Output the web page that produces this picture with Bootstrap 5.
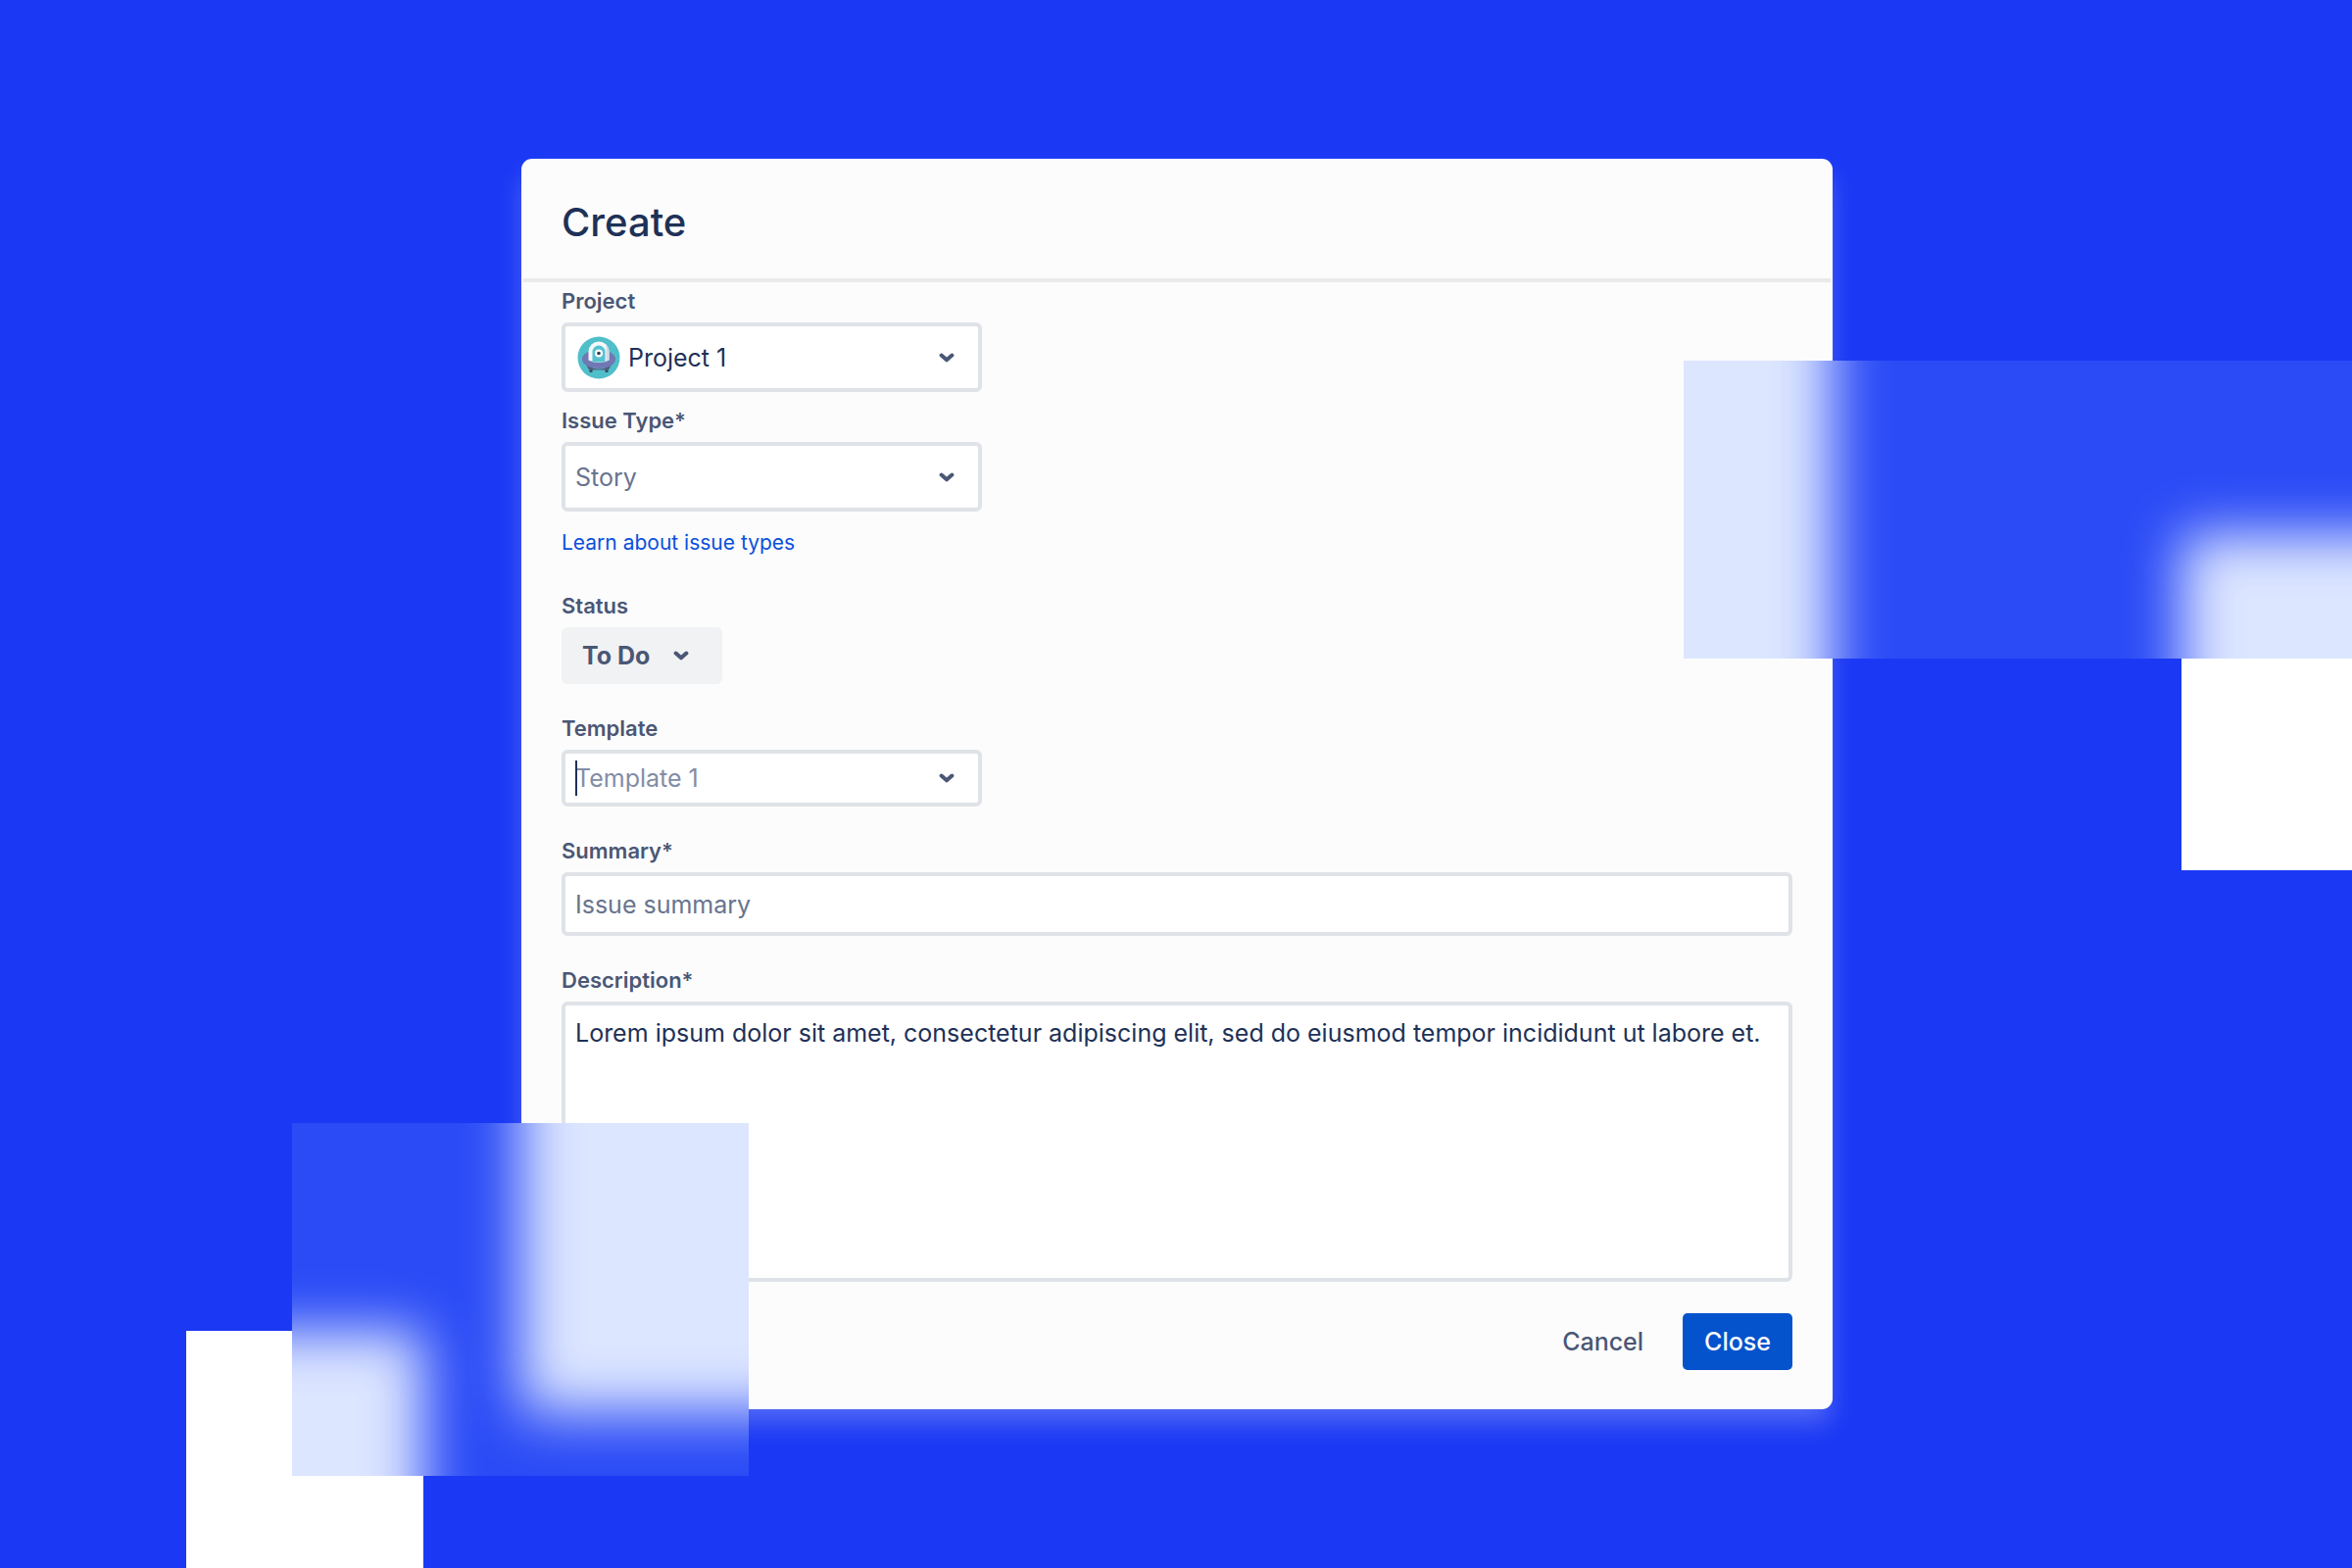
<!DOCTYPE html>
<html lang="en">
<head>
<meta charset="utf-8">
<meta name="viewport" content="width=device-width, initial-scale=1">
<title>Create</title>
<link href="https://cdn.jsdelivr.net/npm/bootstrap@5.3.0/dist/css/bootstrap.min.css" rel="stylesheet">
<style>
  :root {
    --ink: #1e3157;
    --ink-soft: #4a5775;
    --ink-muted: #68748f;
    --line: #dfe2e6;
    --backdrop: #1b39f4;
    --glow: 0 16px 26px -3px rgba(255, 255, 255, .25);
  }
  body { background: var(--backdrop); color: var(--ink); font-family: Inter, sans-serif; font-size: 25px; line-height: 32px; }
  .stage { min-height: 100vh; padding: 162px 24px 120px 26px; }

  .dialog-box { max-width: 1338px; background: #fcfcfc; border-radius: 11px; box-shadow: var(--glow); }
  .dialog-head { margin: 0 2px; padding: 44px 39px 36px; border-bottom: 4px solid #e8eaec; }
  .dialog-head h1 { font-size: 40px; line-height: 42px; font-weight: 500; }
  .dialog-form { padding: 7px 41px 40px; }

  .field-label { display: block; margin-bottom: 10px; font-size: 22px; line-height: 24px; font-weight: 600; color: var(--ink-soft); }
  .learn-link { font-size: 21px; line-height: 24px; color: #0b50dc; }

  .form-select, .form-control {
    border: 4px solid var(--line);
    border-radius: 6px;
    background-color: #fff;
    color: var(--ink);
    font-size: 25px;
    line-height: 32px;
    padding: 0 10px;
  }
  .form-select {
    --bs-form-select-bg-img: url("data:image/svg+xml,%3csvg xmlns='http://www.w3.org/2000/svg' viewBox='0 0 16 10'%3e%3cpath fill='none' stroke='%234a5775' stroke-width='4' stroke-linecap='round' stroke-linejoin='round' d='M2.600 2.500 8 7.300l5.400-4.800'/%3e%3c/svg%3e");
    background-size: 16px 10px;
    background-position: right 24px center;
  }
  .picker { max-width: 429px; }
  .picker .form-select { height: 71px; }
  .picker .form-select.short-box { height: 58px; }
  .picker .with-avatar { padding-left: 64px; }
  .muted-text, .form-control::placeholder { color: var(--ink-muted); opacity: 1; }
  .short-box::placeholder { color: #838da5; opacity: 1; }
  .avatar { width: 44px; height: 44px; left: 16px; top: 14px; pointer-events: none; }
  .text-caret { width: 2px; height: 36px; left: 14px; top: 11px; background: var(--ink); }

  .status-select { width: 164px; height: 58px; border: 0; background-color: #f1f2f4; color: var(--ink-soft); font-weight: 700; padding-left: 21px; background-position: right 34px center; }
  .summary-box { height: 65px; }
  .description-box { height: 286px; padding-top: 12px; resize: none; }

  .space-sm { margin-bottom: 17px; }
  .space-md { margin-bottom: 20px; }
  .space-lg { margin-bottom: 33px; }
  .space-xl { margin-bottom: 40px; }

  .dialog-actions { margin-top: 32px; gap: 18px; }
  .dialog-actions .btn { height: 58px; padding: 0 22px; border: 0; border-radius: 5px; font-size: 25px; line-height: 32px; font-weight: 500; }
  .btn-cancel { color: var(--ink-soft); }
  .btn-close-issue, .btn-close-issue:hover { background: #0453cd; color: #fff; }

  .deco-block { background: #fff; }
  .block-right { right: 0; top: 545px; width: 174px; height: 343px; }
  .block-left { left: 190px; top: 1358px; width: 242px; bottom: 0; }

  /* Frosted panes: each one holds soft copies of the shapes behind it under a tint */
  .glass { background: var(--backdrop); overflow: hidden; pointer-events: none; }
  .glass::after { content: ""; position: absolute; inset: 0; background: rgba(100, 141, 255, .22); }
  .glass-shape { position: absolute; background: #fff; filter: blur(28px); }
  .glass-right { right: 0; top: 368px; width: 682px; height: 304px; }
  .glass-right .soft-dialog { left: -200px; width: 352px; top: -200px; bottom: -200px; }
  .glass-right .soft-block { left: 508px; right: -200px; top: 177px; bottom: -200px; }
  .glass-left { left: 298px; top: 1146px; width: 466px; height: 360px; }
  .glass-left .soft-dialog { left: 234px; right: -200px; top: -200px; height: 492px; box-shadow: var(--glow); }
  .glass-left .soft-block { left: -200px; width: 334px; top: 212px; bottom: -200px; }
</style>
</head>
<body>
<main class="stage position-relative overflow-hidden">
  <div class="deco-block block-right position-absolute" aria-hidden="true"></div>
  <div class="deco-block block-left position-absolute" aria-hidden="true"></div>

  <section class="dialog-box mx-auto" aria-labelledby="dialog-title">
    <header class="dialog-head">
      <h1 class="m-0" id="dialog-title">Create</h1>
    </header>
    <form class="dialog-form">
      <div class="picker space-sm">
        <label class="field-label" for="project">Project</label>
        <div class="position-relative">
          <select class="form-select with-avatar" id="project"><option>Project 1</option></select>
          <svg class="avatar position-absolute" viewBox="0 0 44 44" aria-hidden="true">
            <circle cx="22" cy="22" r="21.500" fill="#4fbfca"/>
            <path d="M12.500 31v6h3v-5zM31.500 31v6h-3v-5z" fill="#3d4a67"/>
            <path d="M9 29q13 9 26 0l-3 5.500H12z" fill="#505f79"/>
            <ellipse cx="22" cy="23.500" rx="17" ry="9.500" fill="#7178b4"/>
            <path d="M11.500 24.500V16a10.500 10.500 0 0 1 21 0v8.500q-10.500 5-21 0z" fill="#f4f7fb"/>
            <path d="M29.500 8.500a10.500 10.500 0 0 1 3 7.500v8.500l-3 1.200z" fill="#d3dae6"/>
            <path d="M15.500 26.500V16a6.500 6.500 0 0 1 13 0v10.500z" fill="#55c2cf"/>
            <circle cx="22" cy="17.500" r="4" fill="#fff"/>
            <circle cx="22" cy="17.500" r="1.800" fill="#2c3e5d"/>
          </svg>
        </div>
      </div>

      <div class="picker space-md">
        <label class="field-label" for="issue-type">Issue Type*</label>
        <select class="form-select muted-text" id="issue-type"><option>Story</option></select>
      </div>
      <a class="learn-link d-table text-decoration-none space-xl" href="#">Learn about issue types</a>

      <div class="space-lg">
        <label class="field-label" for="status">Status</label>
        <select class="form-select status-select" id="status"><option>To Do</option></select>
      </div>

      <div class="picker space-lg">
        <label class="field-label" for="template">Template</label>
        <div class="position-relative">
          <input class="form-select short-box" id="template" type="text" placeholder="Template 1">
          <span class="text-caret position-absolute" aria-hidden="true"></span>
        </div>
      </div>

      <div class="space-lg">
        <label class="field-label" for="summary">Summary*</label>
        <input class="form-control summary-box" id="summary" type="text" placeholder="Issue summary">
      </div>

      <div>
        <label class="field-label" for="description">Description*</label>
        <textarea class="form-control description-box d-block" id="description">Lorem ipsum dolor sit amet, consectetur adipiscing elit, sed do eiusmod tempor incididunt ut labore et.</textarea>
      </div>

      <div class="dialog-actions d-flex justify-content-end">
        <button class="btn btn-cancel" type="button">Cancel</button>
        <button class="btn btn-close-issue" type="button">Close</button>
      </div>
    </form>
  </section>

  <div class="glass glass-right position-absolute" aria-hidden="true">
    <div class="glass-shape soft-dialog"></div>
    <div class="glass-shape soft-block"></div>
  </div>
  <div class="glass glass-left position-absolute" aria-hidden="true">
    <div class="glass-shape soft-dialog"></div>
    <div class="glass-shape soft-block"></div>
  </div>
</main>
<script src="https://cdn.jsdelivr.net/npm/bootstrap@5.3.0/dist/js/bootstrap.bundle.min.js"></script>
</body>
</html>
